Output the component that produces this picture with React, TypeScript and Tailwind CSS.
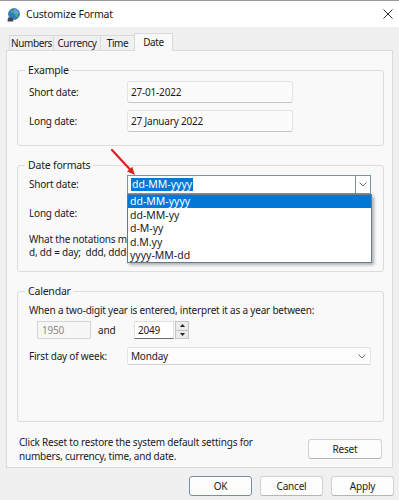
import type { ReactNode } from 'react';

type GroupBoxProps = {
  title: string;
  className?: string;
  children: ReactNode;
};

function GroupBox({ title, className = '', children }: GroupBoxProps) {
  return (
    <fieldset className={`border border-[#dcdcdc] rounded-[3px] px-[11px] ${className}`}>
      <legend className="ml-[-4px] px-[3px] text-[10.5px] leading-[16px]">{title}</legend>
      {children}
    </fieldset>
  );
}

function TextBox({ value, className = '' }: { value: string; className?: string }) {
  return (
    <div
      className={`flex items-center h-[22px] pl-[3px] bg-[#fbfbfb] border border-[#e3e3e3] border-b-[#c4c4c4] rounded-[3px] ${className}`}
    >
      {value}
    </div>
  );
}

function Chevron({ className = '' }: { className?: string }) {
  return (
    <svg width="8" height="5" viewBox="0 0 8 5" className={className}>
      <path d="M0.5 0.5 L4 4 L7.5 0.5" fill="none" stroke="#6a6a6a" strokeWidth="1" />
    </svg>
  );
}

function Button({ label, primary = false, className = '' }: { label: string; primary?: boolean; className?: string }) {
  return (
    <button
      className={`h-[20px] flex items-center justify-center rounded-[3px] bg-[#fdfdfd] ${
        primary ? 'border border-[#7390ad]' : 'border border-[#d2d2d2] border-b-[#b5b5b5]'
      } ${className}`}
    >
      {label}
    </button>
  );
}

function RegionIcon() {
  return (
    <svg width="13" height="14" viewBox="0 0 13 14">
      <circle cx="7" cy="6" r="5.5" fill="#2f7fc4" />
      <path d="M7 0.8 A5.2 5.2 0 0 1 12.2 6 L7 6 Z" fill="#5aa7e3" />
      <path d="M4 2.5 C5.5 1.8 7 2.5 7.5 3.8 C6.6 4.6 5.4 4.2 4.6 5.2 C3.8 4.8 3.4 3.6 4 2.5 Z" fill="#5fb04a" />
      <path d="M8.4 6.2 C9.8 5.8 11.2 6.6 11 8.2 C10.1 9.2 8.9 9 8.5 8 Z" fill="#5fb04a" />
      <circle cx="7" cy="6" r="5.5" fill="none" stroke="#1d5a93" strokeWidth="0.6" />
      <path d="M1 9.5 L5.5 9.5 L6.5 13.5 L0.5 13.5 Z" fill="#3e4a55" />
    </svg>
  );
}

const tabs = [
  { label: 'Numbers', w: 'w-[45px]' },
  { label: 'Currency', w: 'w-[48px]' },
  { label: 'Time', w: 'w-[35px]' },
];

const formats = ['dd-MM-yyyy', 'dd-MM-yy', 'd-M-yy', 'd.M.yy', 'yyyy-MM-dd'];

export default function App() {
  return (
    <div className="relative w-[399px] h-[500px] overflow-hidden bg-[#f0f0f0] text-[#1b1b1b] text-[10px] tracking-[-0.2px] font-['Noto_Sans',sans-serif]">
      {/* title bar */}
      <div className="h-[27px] bg-white border-t border-[#9a9a9a] flex items-center">
        <div className="ml-[7px] mt-[1px]">
          <RegionIcon />
        </div>
        <span className="ml-[6px] text-[10.5px] leading-none">Customize Format</span>
        <svg width="10" height="10" viewBox="0 0 10 10" className="ml-auto mr-[6px]">
          <path d="M0.5 0.5 L9.5 9.5 M9.5 0.5 L0.5 9.5" stroke="#2b2b2b" strokeWidth="1" />
        </svg>
      </div>

      {/* tabs */}
      <div className="h-[23px] flex items-end pl-[9px] tracking-[-0.4px]">
        {tabs.map((t) => (
          <div
            key={t.label}
            className={`${t.w} h-[15px] flex items-center justify-center bg-[#f0f0f0] border border-b-0 border-[#d9d9d9] -ml-px first:ml-0`}
          >
            {t.label}
          </div>
        ))}
        <div className="w-[39px] h-[18px] -mb-px relative z-10 flex items-center justify-center bg-[#f9f9f9] border border-b-0 border-[#d9d9d9] -ml-px pb-[1px]">
          Date
        </div>
      </div>

      {/* tab panel */}
      <div className="ml-[6px] w-[387px] h-[418px] bg-[#f9f9f9] border border-[#dadada] pl-[10px] pr-[8px] flex flex-col">
        <GroupBox title="Example" className="mt-[11px] h-[84px]">
          <div className="pt-[3px] flex flex-col gap-[7px]">
            <div className="flex items-center">
              <span className="w-[98px]">Short date:</span>
              <TextBox value="27-01-2022" className="w-[166px]" />
            </div>
            <div className="flex items-center">
              <span className="w-[98px]">Long date:</span>
              <TextBox value="27 January 2022" className="w-[166px]" />
            </div>
          </div>
        </GroupBox>

        <GroupBox title="Date formats" className="mt-[11px] h-[115px]">
          <div className="pt-[2px] flex flex-col">
            <div className="flex items-center h-[19px]">
              <span className="w-[98px]">Short date:</span>
              <div className="relative w-[244px] h-[19px] bg-white border border-[#7894ab] flex items-center text-[10.5px] tracking-normal">
                <span className="ml-[3px] px-[1px] h-[13px] flex items-center bg-[#0078d7] text-white">dd-MM-yyyy</span>
                <div className="ml-auto w-[15px] h-full border-l border-[#7894ab] flex items-center justify-center">
                  <Chevron />
                </div>
                {/* open list */}
                <div className="absolute left-[-1px] top-[18px] w-[245px] z-20 bg-white border border-[#5f7e96] shadow-[2px_2px_3px_rgba(0,0,0,0.3)]">
                  {formats.map((f, i) => (
                    <div
                      key={f}
                      className={`h-[13.4px] pl-[2px] flex items-center leading-none ${
                        i === 0 ? 'bg-[#0078d7] text-white' : ''
                      }`}
                    >
                      {f}
                    </div>
                  ))}
                </div>
              </div>
            </div>
            <div className="flex items-center h-[19px] mt-[10px]">
              <span className="w-[98px]">Long date:</span>
              <div className="w-[244px] h-[19px] bg-[#fdfdfd] border border-[#e3e3e3]" />
            </div>
            <div className="mt-[10px] leading-[13px] whitespace-nowrap w-[98px] overflow-hidden">
              <div>What the notations mean:</div>
              <div>d, dd = day;&nbsp; ddd, dddd = day of week;&nbsp; M = month;&nbsp; y = year</div>
            </div>
          </div>
        </GroupBox>

        <GroupBox title="Calendar" className="mt-[11px] h-[139px]">
          <div className="pt-[4px] leading-[14px]">When a two-digit year is entered, interpret it as a year between:</div>
          <div className="mt-[4px] flex items-center h-[18px]">
            <div className="ml-[8px] w-[54px] h-[18px] pl-[4px] flex items-center bg-[#f7f7f7] border border-[#d4d4d4] text-[#8c8c8c]">
              1950
            </div>
            <span className="ml-[7px] w-[36px]">and</span>
            <div className="w-[40px] h-[18px] pl-[3px] flex items-center bg-white border border-[#e0e0e0] border-b-[#6e6e6e]">
              2049
            </div>
            <div className="ml-px w-[14px] h-[18px] flex flex-col border border-[#c4c4c4] bg-[#ebebeb]">
              <div className="flex-1 flex items-center justify-center border-b border-[#c4c4c4]">
                <svg width="5" height="3" viewBox="0 0 5 3">
                  <path d="M2.5 0 L5 3 L0 3 Z" fill="#222" />
                </svg>
              </div>
              <div className="flex-1 flex items-center justify-center">
                <svg width="5" height="3" viewBox="0 0 5 3">
                  <path d="M0 0 L5 0 L2.5 3 Z" fill="#222" />
                </svg>
              </div>
            </div>
          </div>
          <div className="mt-[8px] flex items-center h-[18px]">
            <span className="w-[98px]">First day of week:</span>
            <div className="w-[244px] h-[18px] bg-[#fdfdfd] border border-[#e3e3e3] border-b-[#cfcfcf] rounded-[2px] flex items-center pl-[3px]">
              Monday
              <Chevron className="ml-auto mr-[4px]" />
            </div>
          </div>
        </GroupBox>

        <div className="mt-[13px] flex items-center">
          <div className="ml-[2px] leading-[14px]">
            <div>Click Reset to restore the system default settings for</div>
            <div>numbers, currency, time, and date.</div>
          </div>
          <Button label="Reset" className="ml-auto mr-[2px] w-[74px] h-[18px]" />
        </div>
      </div>

      {/* dialog buttons */}
      <div className="mt-[8px] flex justify-end gap-[8px] pr-[5px]">
        <Button label="OK" primary className="w-[63px]" />
        <Button label="Cancel" className="w-[63px]" />
        <Button label="Apply" className="w-[63px]" />
      </div>

      {/* red annotation arrow */}
      <svg width="32" height="34" viewBox="0 0 32 34" className="absolute left-[108px] top-[146px] z-30">
        <line x1="4" y1="4" x2="23" y2="24.5" stroke="#d8231f" strokeWidth="2.2" strokeLinecap="round" />
        <polygon points="27,29 19,25.5 24.2,20.7" fill="#d8231f" />
      </svg>
    </div>
  );
}
